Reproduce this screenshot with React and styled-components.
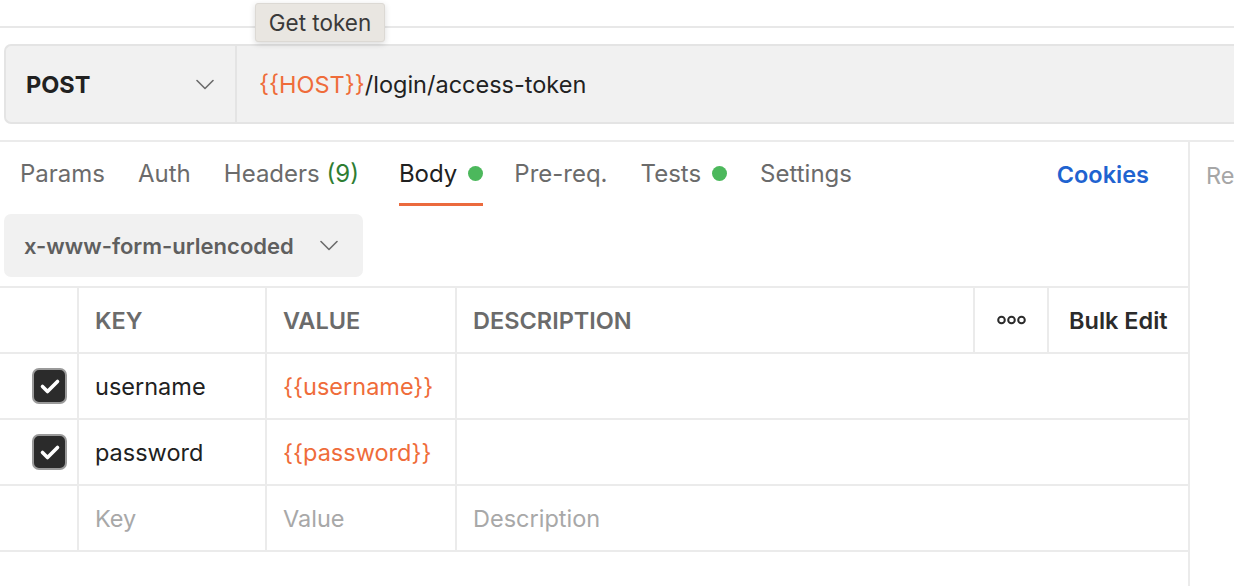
import React from 'react'
import styled, { createGlobalStyle } from 'styled-components'

const line = '#ebebeb'
const orange = '#ef6c3a'
const green = '#4cb85c'

const GlobalStyle = createGlobalStyle`
  body {
    margin: 0;
    background: #ffffff;
    font-family: Inter, "Noto Sans", sans-serif;
    overflow: hidden;
  }
`

const Page = styled.div`
  position: relative;
  width: 1234px;
  height: 586px;
  overflow: hidden;
`

const TopStrip = styled.div`
  height: 26px;
  border-bottom: 2px solid #e8e8e8;
`

const Tooltip = styled.div`
  position: absolute;
  left: 255px;
  top: 3px;
  width: 130px;
  height: 39px;
  box-sizing: border-box;
  background: #e9e6e1;
  border: 1px solid #dcd9d4;
  border-radius: 3px;
  box-shadow: 0 2px 6px rgba(0, 0, 0, 0.15);
  display: flex;
  align-items: center;
  justify-content: center;
  font-size: 22.5px;
  color: #3a3a3a;
`

const UrlBar = styled.div`
  margin: 16px 0 0 4px;
  width: 1300px;
  height: 80px;
  box-sizing: border-box;
  display: flex;
  background: #f1f1f1;
  border: 2px solid #e4e4e4;
  border-right: none;
  border-radius: 7px 0 0 7px;
`

const Method = styled.div`
  width: 231px;
  box-sizing: border-box;
  display: flex;
  align-items: center;
  justify-content: space-between;
  padding: 0 21px 0 20px;
  border-right: 2px solid #e4e4e4;
  font-size: 23.5px;
  font-weight: 700;
  color: #212121;
`

const UrlText = styled.div`
  display: flex;
  align-items: center;
  padding-left: 22px;
  font-size: 23.5px;
  color: #212121;
`

const Var = styled.span`
  color: ${orange};
`

const Main = styled.div`
  margin-top: 16px;
  display: flex;
  border-top: 2px solid ${line};
  height: 445px;
`

const Left = styled.div`
  width: 1188px;
  flex-shrink: 0;
`

const Right = styled.div`
  flex: 1;
  border-left: 2px solid ${line};
  padding: 19px 0 0 16px;
  font-size: 23.5px;
  color: #a6a6a6;
  white-space: nowrap;
  overflow: hidden;
`

const Tabs = styled.div`
  height: 70px;
  display: flex;
  align-items: stretch;
  padding: 0 39px 0 20px;
`

const Tab = styled.div`
  display: flex;
  align-items: center;
  gap: 11px;
  margin-right: ${(p) => (p.$gap === undefined ? 33 : p.$gap)}px;
  font-size: 24px;
  color: ${(p) => (p.$active ? '#212121' : '#6b6b6b')};
  border-bottom: 3px solid ${(p) => (p.$active ? '#eb6a3d' : 'transparent')};
  box-sizing: border-box;
  padding-top: 1px;
  margin-bottom: 6px;
`

const Count = styled.span`
  color: #2e7d32;
`

const Dot = styled.span`
  width: 15px;
  height: 15px;
  border-radius: 50%;
  background: ${green};
`

const Cookies = styled.div`
  margin-left: auto;
  display: flex;
  align-items: center;
  font-size: 23.5px;
  font-weight: 600;
  color: #1f63d0;
  margin-bottom: 5px;
`

const BodyType = styled.div`
  margin: 2px 0 0 4px;
  width: 359px;
  height: 63px;
  box-sizing: border-box;
  padding: 0 25px 0 20px;
  display: flex;
  align-items: center;
  justify-content: space-between;
  background: #f1f1f1;
  border-radius: 7px;
  font-size: 22px;
  font-weight: 600;
  color: #5f5f5f;
`

const Table = styled.div`
  margin-top: 9px;
  border-top: 2px solid ${line};
`

const Row = styled.div`
  display: grid;
  grid-template-columns: 77px 188px 190px 518px 74px 141px;
  height: 66px;
  border-bottom: 2px solid ${line};
  box-sizing: border-box;
`

const Cell = styled.div`
  display: flex;
  align-items: center;
  justify-content: ${(p) => p.$align || 'flex-start'};
  padding: ${(p) => (p.$pad === undefined ? '0 0 0 16px' : p.$pad)};
  border-left: ${(p) => (p.$first ? 'none' : `2px solid ${line}`)};
  grid-column: ${(p) => p.$span || 'auto'};
  font-size: 23.5px;
  color: ${(p) => p.$color || '#212121'};
  min-width: 0;
  white-space: nowrap;
`

const HeadCell = styled(Cell)`
  font-size: 23.5px;
  font-weight: 600;
  color: ${(p) => p.$color || '#6b6b6b'};
`

const Check = styled.div`
  width: 35px;
  height: 36px;
  box-sizing: border-box;
  background: #2b2b2b;
  border: 2px solid #9a9a9a;
  border-radius: 7px;
  display: flex;
  align-items: center;
  justify-content: center;
  margin-right: 10px;
`

const Chevron = ({ w = 18, color = '#6b6b6b' }) => (
  <svg width={w} height={w / 2 + 2} viewBox="0 0 18 11" fill="none">
    <path d="M1 1.5l8 8 8-8" stroke={color} strokeWidth="1.6" strokeLinecap="round" strokeLinejoin="round" />
  </svg>
)

const CheckMark = () => (
  <svg width="24" height="24" viewBox="0 0 24 24" fill="none">
    <path d="M4.5 12.5l5 5 10-10" stroke="#ffffff" strokeWidth="3.6" strokeLinecap="round" strokeLinejoin="round" />
  </svg>
)

const MoreDots = () => (
  <svg width="29" height="10" viewBox="0 0 29 10" fill="none">
    <circle cx="4.5" cy="5" r="3.3" stroke="#2b2b2b" strokeWidth="2" />
    <circle cx="14.5" cy="5" r="3.3" stroke="#2b2b2b" strokeWidth="2" />
    <circle cx="24.5" cy="5" r="3.3" stroke="#2b2b2b" strokeWidth="2" />
  </svg>
)

const params = [
  { key: 'username', value: '{{username}}' },
  { key: 'password', value: '{{password}}' },
]

const tabs = [
  { label: 'Params' },
  { label: 'Auth' },
  { label: 'Headers', count: '(9)', gap: 40 },
  { label: 'Body', dot: true, active: true, gap: 31 },
  { label: 'Pre-req.' },
  { label: 'Tests', dot: true },
  { label: 'Settings', gap: 0 },
]

const App = () => {
  return (
    <Page>
      <GlobalStyle />
      <TopStrip />
      <Tooltip>Get token</Tooltip>
      <UrlBar>
        <Method>
          POST
          <Chevron />
        </Method>
        <UrlText>
          <Var>{'{{HOST}}'}</Var>/login/access-token
        </UrlText>
      </UrlBar>
      <Main>
        <Left>
          <Tabs>
            {tabs.map((t) => (
              <Tab key={t.label} $active={t.active} $gap={t.gap}>
                <span>
                  {t.label}
                  {t.count && <Count> {t.count}</Count>}
                </span>
                {t.dot && <Dot />}
              </Tab>
            ))}
            <Cookies>Cookies</Cookies>
          </Tabs>
          <BodyType>
            x-www-form-urlencoded
            <Chevron />
          </BodyType>
          <Table>
            <Row>
              <HeadCell $first $pad="0" />
              <HeadCell>KEY</HeadCell>
              <HeadCell>VALUE</HeadCell>
              <HeadCell>DESCRIPTION</HeadCell>
              <HeadCell $align="center" $pad="0">
                <MoreDots />
              </HeadCell>
              <HeadCell $pad="0 0 0 20px" $color="#2b2b2b">Bulk Edit</HeadCell>
            </Row>
            {params.map((p) => (
              <Row key={p.key}>
                <Cell $first $align="flex-end" $pad="0">
                  <Check>
                    <CheckMark />
                  </Check>
                </Cell>
                <Cell>{p.key}</Cell>
                <Cell $color={orange}>{p.value}</Cell>
                <Cell $span="span 3" />
              </Row>
            ))}
            <Row>
              <Cell $first $pad="0" />
              <Cell $color="#a8a8a8">Key</Cell>
              <Cell $color="#a8a8a8">Value</Cell>
              <Cell $color="#a8a8a8" $span="span 3">Description</Cell>
            </Row>
          </Table>
        </Left>
        <Right>Response</Right>
      </Main>
    </Page>
  )
}

export default App
